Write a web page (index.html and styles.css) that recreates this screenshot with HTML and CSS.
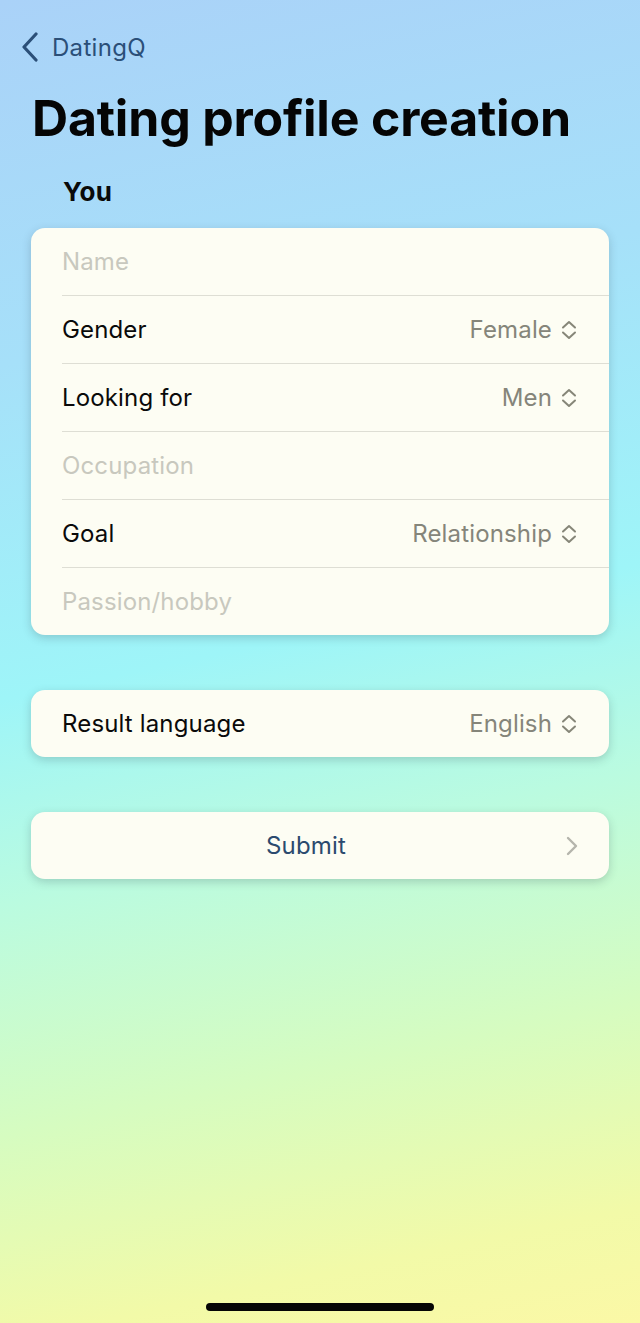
FILE: index.html
```html
<!DOCTYPE html>
<html lang="en">
<head>
<meta charset="utf-8">
<title>Dating profile creation</title>
<link rel="stylesheet" href="styles.css">
</head>
<body>
<div class="screen">
  <div class="nav">
    <svg class="back-icon" width="18" height="30" viewBox="0 0 18 30"><path d="M15 2 L3 15 L15 28" fill="none" stroke="#2b4f78" stroke-width="3.2" stroke-linecap="round" stroke-linejoin="round"/></svg>
    <span class="nav-label">DatingQ</span>
  </div>
  <h1 class="title">Dating profile creation</h1>
  <div class="section-label">You</div>
  <div class="card">
    <div class="row"><span class="placeholder">Name</span></div>
    <div class="row"><span class="label">Gender</span><span class="value">Female<svg class="updown" width="16" height="20" viewBox="0 0 16 20"><path d="M2 7.5 L8 2 L14 7.5 M2 12.5 L8 18 L14 12.5" fill="none" stroke="#868678" stroke-width="2" stroke-linecap="round" stroke-linejoin="round"/></svg></span></div>
    <div class="row"><span class="label">Looking for</span><span class="value">Men<svg class="updown" width="16" height="20" viewBox="0 0 16 20"><path d="M2 7.5 L8 2 L14 7.5 M2 12.5 L8 18 L14 12.5" fill="none" stroke="#868678" stroke-width="2" stroke-linecap="round" stroke-linejoin="round"/></svg></span></div>
    <div class="row"><span class="placeholder">Occupation</span></div>
    <div class="row"><span class="label">Goal</span><span class="value">Relationship<svg class="updown" width="16" height="20" viewBox="0 0 16 20"><path d="M2 7.5 L8 2 L14 7.5 M2 12.5 L8 18 L14 12.5" fill="none" stroke="#868678" stroke-width="2" stroke-linecap="round" stroke-linejoin="round"/></svg></span></div>
    <div class="row last"><span class="placeholder">Passion/hobby</span></div>
  </div>
  <div class="card card-single">
    <div class="row last"><span class="label">Result language</span><span class="value">English<svg class="updown" width="16" height="20" viewBox="0 0 16 20"><path d="M2 7.5 L8 2 L14 7.5 M2 12.5 L8 18 L14 12.5" fill="none" stroke="#868678" stroke-width="2" stroke-linecap="round" stroke-linejoin="round"/></svg></span></div>
  </div>
  <div class="card card-submit">
    <div class="submit-row">
      <span class="submit-label">Submit</span>
      <svg class="chev-right" width="12" height="20" viewBox="0 0 12 20"><path d="M2 2 L10 10 L2 18" fill="none" stroke="#b5b5ac" stroke-width="2.4" stroke-linecap="round" stroke-linejoin="round"/></svg>
    </div>
  </div>
  <div class="spacer"></div>
  <div class="home-indicator"></div>
</div>
</body>
</html>
```
FILE: styles.css
```css
* { box-sizing: border-box; }
html, body { margin: 0; padding: 0; }
body {
  width: 640px;
  height: 1323px;
  font-family: Inter, "Noto Sans", sans-serif;
  background: linear-gradient(168deg, #aad2f8 0%, #a6e0f9 25%, #9ef5f8 48%, #bafbe0 62%, #d6fcc0 78%, #f2faa8 92%, #fbf8a6 100%);
  overflow: hidden;
}
.screen {
  height: 1323px;
  display: flex;
  flex-direction: column;
}
.nav {
  display: flex;
  align-items: center;
  height: 32px;
  margin-top: 31px;
  padding-left: 21px;
  gap: 13px;
}
.nav-label {
  font-size: 24px;
  color: #2b4f78;
  letter-spacing: 0.3px;
}
.title {
  margin: 25px 0 0 32px;
  font-size: 50px;
  font-weight: 700;
  line-height: 60px;
  color: #050505;
  letter-spacing: -0.2px;
}
.section-label {
  margin: 27px 0 0 63px;
  font-size: 26px;
  font-weight: 700;
  line-height: 34px;
  color: #0a0a0a;
  letter-spacing: 0.3px;
}
.card {
  margin: 19px 31px 0 31px;
  background: #fdfdf3;
  border-radius: 14px;
  box-shadow: 0 3px 10px rgba(40, 60, 70, 0.22);
  overflow: hidden;
}
.card-single { margin-top: 55px; }
.card-submit { margin-top: 55px; }
.row {
  height: 68px;
  margin-left: 31px;
  padding-right: 32px;
  display: flex;
  align-items: center;
  justify-content: space-between;
  border-bottom: 1px solid #deded4;
  font-size: 24px;
  letter-spacing: 0.15px;
}
.row.last { border-bottom: none; height: 67px; }
.label { color: #0a0a0a; }
.placeholder { color: #c8c8be; }
.value {
  color: #85857a;
  display: flex;
  align-items: center;
  gap: 9px;
}
.updown { display: block; }
.submit-row {
  height: 67px;
  display: flex;
  align-items: center;
  justify-content: center;
  position: relative;
  padding-right: 28px;
  font-size: 24px;
  letter-spacing: 0.15px;
}
.submit-label { color: #2b4a6e; }
.chev-right {
  position: absolute;
  right: 31px;
  top: 24px;
}
.spacer { flex: 1; }
.home-indicator {
  width: 228px;
  height: 8px;
  border-radius: 4px;
  background: #050505;
  margin: 0 auto 12px auto;
}
```
